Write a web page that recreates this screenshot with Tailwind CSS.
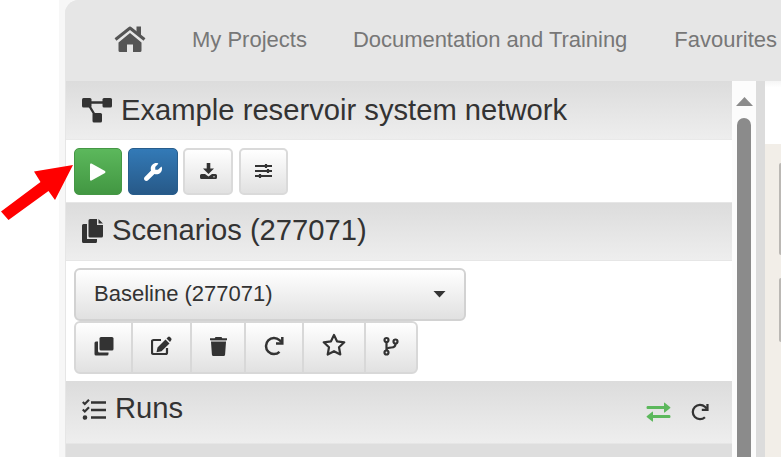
<!DOCTYPE html>
<html lang="en">
<head>
<meta charset="utf-8">
<title>Example reservoir system network</title>
<script src="https://cdn.jsdelivr.net/npm/@tailwindcss/browser@4"></script>
</head>
<body class="relative h-[457px] w-[781px] overflow-hidden bg-white font-['Liberation_Sans',Arial,sans-serif] text-[#333]">
<div class="flex h-full">
  <div class="w-[59px] shrink-0"></div>
  <div class="flex-1 bg-[#f7f7f7] pl-[6px]">
    <div class="flex h-full flex-col overflow-hidden rounded-tl-[14px] bg-[#e6e6e6]">
      <nav class="flex h-[81px] shrink-0 items-center bg-[#e6e6e6] pb-[2px] pl-[49px] text-[22px] whitespace-nowrap text-[#777]">
        <svg class="h-[27px] w-[32px] shrink-0" viewBox="0 0 32 27" fill="#555"><path d="M16 7 27.500 16.500V24.500q0 1.500-1.500 1.500H19v-7.500h-6V26H6q-1.500 0-1.500-1.500v-8z"/><path d="M1.500 13.500 16 2l14.500 11.500" fill="none" stroke="#555" stroke-width="3" stroke-linejoin="round"/><path d="M22.500.5H27v9.500l-4.500-4z"/></svg>
        <a class="ml-[46px]">My Projects</a>
        <a class="ml-[46px] tracking-[-0.03px]">Documentation and Training</a>
        <a class="ml-[47px]">Favourites</a>
      </nav>
      <div class="flex min-h-0 flex-1">
        <main class="ml-[1px] flex w-[666px] shrink-0 flex-col bg-white">
          <h2 class="flex h-[59px] shrink-0 items-center border-b border-[#e9e9e9] bg-linear-to-b from-[#dcdcdc] to-[#eee] pt-[2px] pl-[16px] text-[29.200px] whitespace-nowrap">
            <svg class="mr-[8px] mb-[2px] h-[26px] w-[31px] shrink-0" viewBox="0 0 31 26" fill="#333"><rect y="1" width="9.500" height="9.500" rx="1.500"/><rect x="20.500" y="1" width="9.500" height="9.500" rx="1.500"/><rect x="10.500" y="16" width="9.500" height="9.500" rx="1.500"/><path d="M8 5.500h14M6.500 7.500l6 10" stroke="#333" stroke-width="2.400"/></svg>Example reservoir system network</h2>
          <div class="flex h-[62px] shrink-0 items-start pt-[8px] pl-[8px]">
            <button class="flex h-[47px] w-[48px] items-center justify-center rounded-[5px] border-[1.500px] border-[#459745] bg-linear-to-b from-[#5cb85c] to-[#429742]"><svg class="h-[18px] w-[16px]" viewBox="0 0 16 18" fill="#fff"><path d="M0 1.500Q0 0 1.500.5L15 8q1 1 0 2L1.500 17.500Q0 18 0 16.500z"/></svg></button>
            <button class="ml-[6px] flex h-[47px] w-[50px] items-center justify-center rounded-[5px] border-[1.500px] border-[#285d8c] bg-linear-to-b from-[#337ab7] to-[#275988]"><svg class="h-[18px] w-[18px]" viewBox="0 0 512 512" fill="#fff"><path d="M352 320c88.400 0 160-71.600 160-160c0-15.300-2.200-30.100-6.200-44.200c-3.100-10.800-16.400-13.200-24.300-5.300l-76.800 76.800c-3 3-7.100 4.700-11.300 4.700L336 192c-8.800 0-16-7.200-16-16l0-57.400c0-4.200 1.700-8.300 4.700-11.300l76.800-76.800c7.900-7.900 5.400-21.200-5.300-24.300C382.100 2.200 367.300 0 352 0C263.600 0 192 71.600 192 160c0 19.100 3.400 37.500 9.500 54.500L19.900 396.100C7.200 408.800 0 426.100 0 444.100C0 481.600 30.400 512 67.900 512c18 0 35.300-7.200 48-19.900L297.500 310.500c17 6.200 35.400 9.500 54.500 9.500z"/></svg></button>
            <button class="ml-[5px] flex h-[47px] w-[50px] items-center justify-center rounded-[5px] border-2 border-[#dadada] bg-linear-to-b from-white to-[#e1e1e1]"><svg class="mb-[2px] h-[18px] w-[17px]" viewBox="0 0 17 18" fill="#333"><path d="M6.700 1h3.600v5.500H14l-5.500 5.500L3 6.500h3.700zM1.500 12H5l3.500 2.500 3.500-2.500h3.500q1.500 0 1.500 1.500v2q0 1.500-1.500 1.500h-14Q0 17 0 15.500v-2Q0 12 1.500 12"/><circle cx="14" cy="14.700" r=".7" fill="#eee"/></svg></button>
            <button class="ml-[6px] flex h-[47px] w-[49px] items-center justify-center rounded-[5px] border-2 border-[#dadada] bg-linear-to-b from-white to-[#e1e1e1]"><svg class="mb-[1px] h-[16px] w-[17px]" viewBox="0 0 17 16" fill="none" stroke="#333" stroke-width="2.200"><path d="M0 3h17M0 8h17M0 13h17M11 1v4M13 6v4M5 11v4"/></svg></button>
          </div>
          <h2 class="flex h-[59px] shrink-0 items-center border-y border-[#e6e6e6] bg-linear-to-b from-[#dcdcdc] to-[#eee] pb-[1px] pl-[16px] text-[29.200px] whitespace-nowrap">
            <svg class="mr-[8px] h-[25px] w-[22px] shrink-0" viewBox="0 0 22 25" fill="#333"><path d="M8 0h7v6h6v11q0 1.500-1.500 1.500H8Q6.500 18.500 6.500 17V1.500Q6.500 0 8 0M16.500 0 21 4.500h-4.500zM1.500 5H5v15h10v2.500q0 1.500-1.500 1.500h-12Q0 24 0 22.500v-16Q0 5 1.500 5"/></svg>Scenarios (277071)</h2>
          <div class="flex h-[120px] shrink-0 flex-col items-start pt-[7px] pl-[8px]">
            <button class="flex h-[53px] w-[392px] shrink-0 items-center justify-between rounded-[6px] border-2 border-[#d2d2d2] bg-linear-to-b from-white to-[#e1e1e1] pr-[18px] pb-[2px] pl-[18px] text-[22px]"><span>Baseline (277071)</span><svg class="mt-[1px] h-[7px] w-[13px]" viewBox="0 0 13 7" fill="#333"><path d="M.5 0h12L6.500 6.500z"/></svg></button>
            <div class="flex h-[53px] w-[344px] shrink-0 overflow-hidden rounded-[6px] border-2 border-[#d8d8d8] bg-linear-to-b from-white to-[#e1e1e1] *:flex *:items-center *:justify-center *:pb-[3px]">
              <span class="w-[57px] border-r-2 border-[#d8d8d8]"><svg class="h-[19px] w-[20px]" viewBox="0 0 20 19" fill="#333"><rect x="5.500" width="14" height="13.500" rx="1.500"/><path d="M4 4.500v9.500q0 1.500 1.500 1.500h9V17q0 1.500-1.500 1.500H2Q.5 18.500.5 17V6Q.5 4.500 2 4.500z"/></svg></span>
              <span class="w-[59px] border-r-2 border-[#d8d8d8]"><svg class="h-[20px] w-[21px]" viewBox="0 0 21 20" fill="#333"><path d="M10 4H2.500Q1 4 1 5.500v11Q1 18 2.500 18h12q1.500 0 1.500-1.500V12" fill="none" stroke="#333" stroke-width="2.200"/><path d="M14.500 3.500 18.500 7.500 10.500 15.300l-5 1L6.500 11.500zM15.500 2.500l1.500-1.500q1-.8 2 0l1.200 1.200q.8 1 0 2L19 6z"/></svg></span>
              <span class="w-[54px] border-r-2 border-[#d8d8d8]"><svg class="h-[19px] w-[17px]" viewBox="0 0 17 19" fill="#333"><path d="M5.500 0h6l.8 1.300H17v2H0v-2h4.700z"/><path d="M1 3.300h15V5H1z" fill="#999"/><path d="M1 5h15l-.9 12.500q-.1 1.500-1.600 1.500h-10q-1.500 0-1.600-1.500z"/></svg></span>
              <span class="w-[58px] border-r-2 border-[#d8d8d8]"><svg class="h-[20px] w-[20px]" viewBox="0 0 20 20" fill="none" stroke="#333" stroke-width="2.500"><path d="M15.500 15.800a8 8 0 1 1 0-11.600l2 2"/><path d="M18.300 1v6.500H12"/></svg></span>
              <span class="w-[62px] border-r-2 border-[#d8d8d8]"><svg class="mb-[2px] h-[24px] w-[24px]" viewBox="0 0 24 24" fill="none" stroke="#333" stroke-width="2.200" stroke-linejoin="round"><path d="m12 2 3 6.300 7.300 1-5.300 5 1.300 7.200L12 18.200l-6.300 3.300L7 14.300l-5.300-5 7.300-1z"/></svg></span>
              <span class="w-[50px]"><svg class="h-[20px] w-[16px]" viewBox="0 0 16 20" fill="none" stroke="#333" stroke-width="2.200"><circle cx="3.500" cy="4" r="2"/><circle cx="12.500" cy="5.500" r="2"/><circle cx="3.500" cy="16.500" r="2"/><path d="M3.500 6v8.500M12.500 7.500q0 4-4 4-5 0-5 3"/></svg></span>
            </div>
          </div>
          <h2 class="flex h-[63px] shrink-0 items-center border-b border-[#e6e6e6] bg-linear-to-b from-[#dcdcdc] to-[#eee] pr-[23px] pb-[7px] pl-[16px] text-[29.200px]">
            <svg class="mt-[1px] mr-[8px] h-[21px] w-[25px] shrink-0" viewBox="0 0 25 21" fill="none" stroke="#333" stroke-width="2.700"><path d="M9 3.500h15M9 11h15M9 18.500h15"/><path d="m.8 3 2 2L7 .800M.8 10.500l2 2L7 8.300" stroke-width="2.200"/><circle cx="3" cy="18.500" r="1.200" stroke-width="2.200"/></svg>Runs
            <svg class="mt-[6px] ml-auto h-[20px] w-[25px]" viewBox="0 0 25 20" fill="#5cb85c"><path d="M1.500 4H18V1.500q0-1.500 1-.5l5 4q.8.700 0 1.300l-5 4q-1 1-1-.5V7H1.500Q.5 7 .5 5.500T1.500 4M23.500 13H7v-2.500Q7 9 6 10l-5 4q-.8.700 0 1.300l5 4q1 1 1-.5V16h16.500q1 0 1-1.500t-1-1.500"/></svg>
            <svg class="mt-[7px] ml-[20px] h-[18px] w-[18px]" viewBox="0 0 20 20" fill="none" stroke="#333" stroke-width="2.500"><path d="M15.500 15.800a8 8 0 1 1 0-11.600l2 2"/><path d="M18.300 1v6.500H12"/></svg>
          </h2>
          <div class="flex-1 bg-[#dedede]"></div>
        </main>
        <div class="flex w-[24px] shrink-0 flex-col items-center bg-[#fcfcfc] pt-[16px]">
          <svg class="h-[9px] w-[17px] shrink-0" viewBox="0 0 17 9" fill="#8b8b8b"><path d="M8.500 0 17 9H0z"/></svg>
          <div class="mt-[12px] w-[14px] flex-1 rounded-t-full bg-[#8b8b8b]"></div>
        </div>
        <div class="w-[9px] shrink-0 bg-[#dcdcdc]"></div>
        <aside class="flex flex-1 flex-col items-end bg-[#f2eee8]">
          <div class="h-[63px] w-full shrink-0 bg-white bg-linear-to-b from-[#f5f5f5] to-white to-10%"></div>
          <div class="mt-[19px] h-[92px] w-[2px] rounded-l bg-[#bbb8b4]"></div>
          <div class="mt-[23px] h-[64px] w-[2px] rounded-l bg-[#bbb8b4]"></div>
        </aside>
      </div>
    </div>
  </div>
</div>
<svg class="absolute top-[160px] left-0 h-[65px] w-[76px]" viewBox="0 160 76 65" fill="#f00"><path d="M1 211.500 40.500 182 34 171.500 73 165 55 200 48.500 191 8.500 220z"/></svg>
</body>
</html>
